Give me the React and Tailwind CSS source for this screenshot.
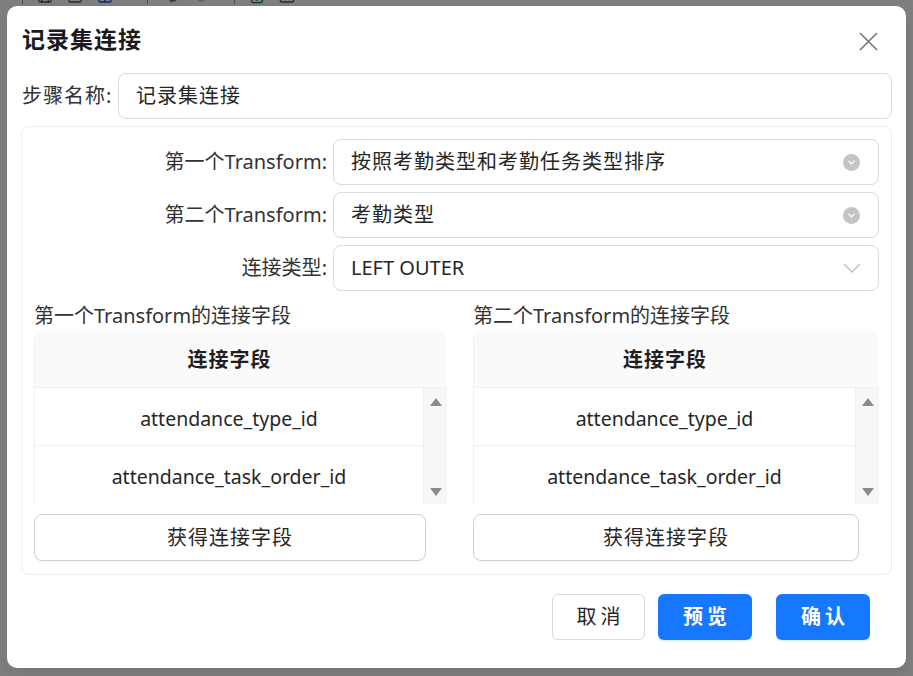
import React from 'react';
import { ChevronDown, Save, SquarePen, Table, Undo2, Redo2, FileDown, Triangle } from 'lucide-react';

const font = { fontFamily: '"Noto Sans", "Noto Sans CJK SC", sans-serif' };

const SelectBox = ({ value, icon = 'circle', cjk }) => (
    <div className="flex-1 h-[46px] flex items-center justify-between pl-[17px] pr-[18px] border border-[#d9d9d9] rounded-lg bg-white">
        <span className={`text-[20px] text-[#262626] ${cjk ? 'tracking-[1px]' : ''}`}>{value}</span>
        {icon === 'circle' ? (
            <span className="w-[17px] h-[17px] rounded-full bg-[#c4c4c4] flex items-center justify-center">
                <ChevronDown size={11} strokeWidth={3} className="text-white" />
            </span>
        ) : (
            <svg width="18" height="10" viewBox="0 0 18 10" className="mr-[-1px]">
                <path d="M1 1 L9 9 L17 1" fill="none" stroke="#bdbdbd" strokeWidth="1.3" />
            </svg>
        )}
    </div>
);

const FieldRow = ({ label, value, icon, cjk }) => (
    <div className="flex items-center">
        <div className="w-[311px] pr-[6px] text-right text-[20px] text-[#333]">{label}:</div>
        <SelectBox value={value} icon={icon} cjk={cjk} />
    </div>
);

const JoinTable = ({ title, fields, width, buttonWidth }) => (
    <div className="flex flex-col" style={{ width }}>
        <div className="h-[24px] leading-[24px] text-[20px] text-[#333] mt-[1px]">{title}</div>
        <div className="mt-[3px] border-l border-[#f0f0f0] rounded-t-lg overflow-hidden">
            <div className="h-[57px] bg-[#fafafa] border-b border-[#f0f0f0] flex items-center">
                <div className="flex-1 text-center font-bold text-[20px] tracking-[1px] text-[#1f1f1f] pt-[2px]">连接字段</div>
                <div className="w-[23px]" />
            </div>
            <div className="flex">
                <div className="flex-1 border-r border-[#f0f0f0]">
                    {fields.map((f, i) => (
                        <div key={f} className={`h-[58px] flex items-center justify-center text-[19.5px] text-[#262626] pt-[4px] ${i === 0 ? 'border-b border-[#f0f0f0]' : ''}`}>
                            {f}
                        </div>
                    ))}
                </div>
                <div className="w-[23px] bg-[#f7f7f7] flex flex-col items-center justify-between pt-[10px] pb-[8px]">
                    <svg width="12" height="8" viewBox="0 0 12 8"><path d="M6 0 L12 8 L0 8 Z" fill="#8c8c8c" /></svg>
                    <svg width="12" height="8" viewBox="0 0 12 8"><path d="M0 0 L12 0 L6 8 Z" fill="#8c8c8c" /></svg>
                </div>
            </div>
        </div>
        <button
            className="mt-[10px] h-[47px] border border-[#d0d0d0] rounded-lg bg-white text-[20px] tracking-[1px] text-[#262626] shadow-[0_2px_0_rgba(0,0,0,0.02)]"
            style={{ width: buttonWidth }}
        >
            获得连接字段
        </button>
    </div>
);

export default function App() {
    const fields = ['attendance_type_id', 'attendance_task_order_id'];

    return (
        <div className="relative w-[913px] h-[676px] overflow-hidden bg-white" style={font}>
            {/* toolbar of the page behind the dialog */}
            <div className="flex items-end h-[10px] -mt-[6px] pl-[22px] gap-[14px] text-[#555]">
                <div className="w-px h-[16px] bg-[#999]" />
                <Save size={16} />
                <SquarePen size={16} />
                <Table size={16} className="text-[#1d4ed8]" />
                <div className="w-px h-[16px] bg-[#999] ml-[20px]" />
                <Undo2 size={18} />
                <Redo2 size={18} className="text-[#bbb]" />
                <div className="w-px h-[16px] bg-[#999] ml-[8px]" />
                <FileDown size={16} className="text-[#15803d]" />
                <Triangle size={16} />
            </div>

            <div className="absolute inset-0 bg-black/50" />

            <div className="absolute left-[7px] top-[6px] w-[899px] h-[662px] bg-white rounded-[10px] pt-[22px] pl-[14px] pr-[14px] shadow-[0_6px_16px_rgba(0,0,0,0.08)]">
                <div className="flex items-center justify-between h-[24px]">
                    <h1 className="pl-[1px] text-[23px] font-bold text-[#1a1a1a] tracking-[1px] -mt-[2px]">记录集连接</h1>
                    <svg width="19" height="19" viewBox="0 0 19 19" className="mr-[14px] mt-[2px]">
                        <path d="M1 1 L18 18 M18 1 L1 18" stroke="#7a7a7a" strokeWidth="1.7" fill="none" />
                    </svg>
                </div>

                <div className="flex items-center mt-[21px]">
                    <div className="w-[97px] pl-[1px] text-[20px] text-[#333] tracking-[1px]">步骤名称:</div>
                    <div className="flex-1 h-[46px] flex items-center pl-[17px] border border-[#d9d9d9] rounded-lg text-[20px] tracking-[1px] text-[#262626]">
                        记录集连接
                    </div>
                </div>

                <div className="mt-[7px] h-[449px] border border-[#ededed] rounded-lg pt-[12px] pr-[12px] pl-[12px]">
                    <div className="flex flex-col gap-[7px] -ml-[12px]">
                        <FieldRow label="第一个Transform" value="按照考勤类型和考勤任务类型排序" cjk />
                        <FieldRow label="第二个Transform" value="考勤类型" cjk />
                        <FieldRow label="连接类型" value="LEFT OUTER" icon="plain" />
                    </div>

                    <div className="flex gap-[26px] mt-[12px]">
                        <JoinTable title="第一个Transform的连接字段" fields={fields} width={413} buttonWidth={392} />
                        <JoinTable title="第二个Transform的连接字段" fields={fields} width={406} buttonWidth={386} />
                    </div>
                </div>

                <div className="flex justify-end mt-[19px] pr-[22px] text-[20px]">
                    <button className="w-[93px] h-[46px] border border-[#d9d9d9] rounded-md bg-white text-[#262626] tracking-[4px] pl-[4px]">
                        取消
                    </button>
                    <button className="ml-[13px] w-[94px] h-[46px] rounded-md bg-[#1677ff] text-white font-semibold tracking-[4px] pl-[4px] shadow-[0_2px_0_rgba(5,145,255,0.12)]">
                        预览
                    </button>
                    <button className="ml-[24px] w-[94px] h-[46px] rounded-md bg-[#1677ff] text-white font-semibold tracking-[4px] pl-[4px] shadow-[0_2px_0_rgba(5,145,255,0.12)]">
                        确认
                    </button>
                </div>
            </div>
        </div>
    );
}
